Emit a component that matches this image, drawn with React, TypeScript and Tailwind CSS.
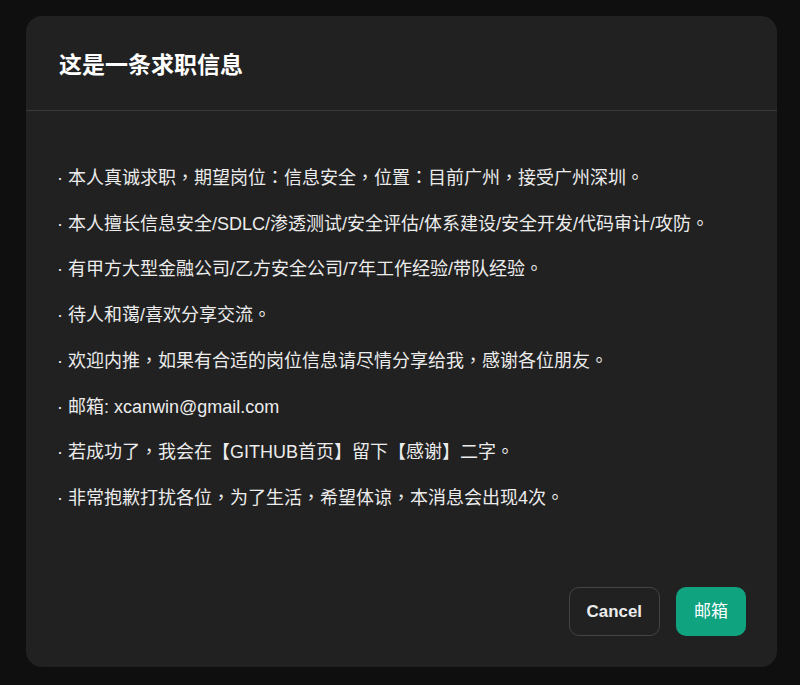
import React from "react";

const LINES = [
  "本人真诚求职，期望岗位：信息安全，位置：目前广州，接受广州深圳。",
  "本人擅长信息安全/SDLC/渗透测试/安全评估/体系建设/安全开发/代码审计/攻防。",
  "有甲方大型金融公司/乙方安全公司/7年工作经验/带队经验。",
  "待人和蔼/喜欢分享交流。",
  "欢迎内推，如果有合适的岗位信息请尽情分享给我，感谢各位朋友。",
  "邮箱: xcanwin@gmail.com",
  "若成功了，我会在【GITHUB首页】留下【感谢】二字。",
  "非常抱歉打扰各位，为了生活，希望体谅，本消息会出现4次。",
];

// the reference draws full-width punctuation centred (Taiwan forms)
const PUNCT = new Set(["，", "。", "："]);
const TC_FONT = { fontFamily: '"Noto Sans CJK TC", sans-serif' };

function renderLine(line: string) {
  const parts: React.ReactNode[] = [];
  let buf = "";
  Array.from(line).forEach((ch, i) => {
    if (PUNCT.has(ch)) {
      if (buf) parts.push(buf);
      buf = "";
      parts.push(
        <span key={i} lang="zh-TW" className="inline-block leading-none" style={TC_FONT}>
          {ch}
        </span>,
      );
    } else {
      buf += ch;
    }
  });
  if (buf) parts.push(buf);
  return parts;
}

export default function App() {
  return (
    <div
      className="min-h-[685px] w-[800px] bg-[#0f0f0f] pl-[26px] pt-[16px]"
      style={{ fontFamily: '"Liberation Sans", "Noto Sans CJK SC", sans-serif' }}
    >
      <div className="flex h-[651px] w-[751px] flex-col rounded-2xl bg-[#212121]">
        <div className="border-b border-[#3a3a3a] px-[33px] pb-[29px] pt-[34px]">
          <h2 className="text-[23px] font-bold leading-[31px] text-white">这是一条求职信息</h2>
        </div>

        <div className="flex-1 px-[31px] pt-[45px]">
          {LINES.map((line) => (
            <p key={line} className="text-[18px] leading-[45.7px] text-[#ececec]">
              · {renderLine(line)}
            </p>
          ))}
        </div>

        <div className="flex justify-end gap-4 px-[31px] pb-[31px]">
          <button className="h-[49px] rounded-[10px] border border-[#444444] px-[17px] text-[16.9px] font-bold text-[#ececec]">
            Cancel
          </button>
          <button className="h-[49px] rounded-[10px] bg-[#10a37f] px-[18px] text-[17px] text-white">
            邮箱
          </button>
        </div>
      </div>
    </div>
  );
}
